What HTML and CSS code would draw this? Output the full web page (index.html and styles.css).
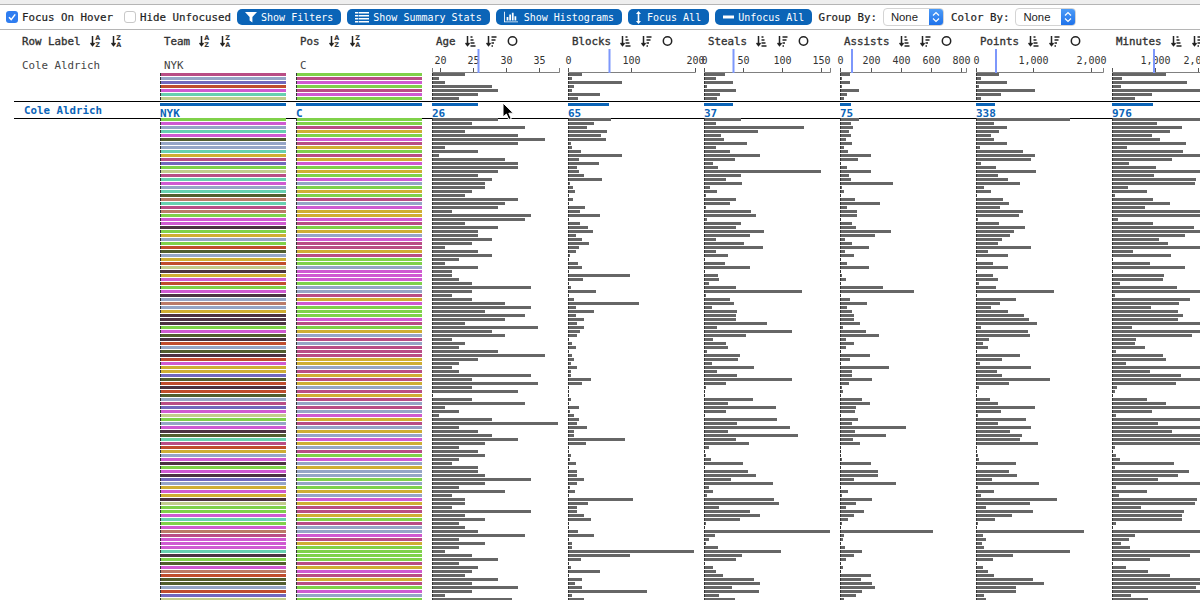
FILE: index.html
```html
<!DOCTYPE html>
<html>
	<head>
		<title>Table Lens</title>
		<link rel="stylesheet" href="styles.css">
	</head>
	<body>
		<svg class="defs">
			<symbol id="i-az" viewBox="0 0 11 12">
				<path d="M2.5 1V10M.5 8L2.5 10.5L4.5 8" class="ico-line"/>
				<text x="5.2" y="5.4" class="ico-letter">A</text>
				<text x="5.2" y="11.8" class="ico-letter">Z</text>
			</symbol>
			<symbol id="i-za" viewBox="0 0 11 12">
				<path d="M2.5 1V10M.5 8L2.5 10.5L4.5 8" class="ico-line"/>
				<text x="5.2" y="5.4" class="ico-letter">Z</text>
				<text x="5.2" y="11.8" class="ico-letter">A</text>
			</symbol>
			<symbol id="i-up" viewBox="0 0 11 12">
				<path d="M2.5 1V10M.5 8L2.5 10.5L4.5 8" class="ico-line"/>
				<path d="M5.5 2H7.5M5.5 5H8.5M5.5 8H9.5M5.5 11H10.5" class="ico-line"/>
			</symbol>
			<symbol id="i-down" viewBox="0 0 11 12">
				<path d="M2.5 1V10M.5 8L2.5 10.5L4.5 8" class="ico-line"/>
				<path d="M5.5 2H10.5M5.5 5H9.5M5.5 8H8M5.5 11H7" class="ico-line"/>
			</symbol>
			<symbol id="i-circle" viewBox="0 0 11 12">
				<circle cx="5.5" cy="6" r="4.2" class="ico-ring"/>
			</symbol>
		</svg>

		<div class="chrome"></div>

		<div class="toolbar">
			<span class="check on">
				<svg width="12" height="12" viewBox="0 0 12 12"><path d="M3 6.2L5.2 8.6L9.2 3.4" class="tick-mark"/></svg>
			</span>
			<span class="tool-label first">Focus On Hover</span>
			<span class="check"></span>
			<span class="tool-label">Hide Unfocused</span>

			<div class="btn">
				<svg width="12" height="12" viewBox="0 0 12 12" class="btn-ico"><path d="M0 1H12L7.4 6V11.5L4.6 9.6V6Z"/></svg>
				Show Filters
			</div>
			<div class="btn">
				<svg width="14" height="12" viewBox="0 0 14 12" class="btn-ico"><path d="M0 1H14V2.6H0ZM0 4H14V5.6H0ZM0 7H14V8.6H0ZM0 10H14V11.6H0Z"/><path d="M3 1H3.6V12H3Z" class="btn-cut"/></svg>
				Show Summary Stats
			</div>
			<div class="btn">
				<svg width="14" height="12" viewBox="0 0 16 12" class="btn-ico wide"><path d="M0 0H1V11H16V12H0ZM3 6H5V10H3ZM6 3H8V10H6ZM9 1H11V10H9ZM12 5H14V10H12Z"/></svg>
				Show Histograms
			</div>
			<div class="btn">
				<svg width="5" height="13" viewBox="0 0 5 13" class="btn-ico wide"><path d="M2.5 0L5 3H3.3V10H5L2.5 13L0 10H1.7V3H0Z"/></svg>
				Focus All
			</div>
			<div class="btn">
				<svg width="11" height="12" viewBox="0 0 11 12" class="btn-ico"><path d="M0 4.5H11V7.5H0Z"/></svg>
				Unfocus All
			</div>

			<span class="tool-label">Group By:</span>
			<div class="select">
				<span class="select-text">None</span>
				<span class="select-arrows"><svg width="8" height="12" viewBox="0 0 8 12"><path d="M1 4.5L4 1.5L7 4.5M1 7.5L4 10.5L7 7.5" class="chev"/></svg></span>
			</div>
			<span class="tool-label">Color By:</span>
			<div class="select">
				<span class="select-text">None</span>
				<span class="select-arrows"><svg width="8" height="12" viewBox="0 0 8 12"><path d="M1 4.5L4 1.5L7 4.5M1 7.5L4 10.5L7 7.5" class="chev"/></svg></span>
			</div>
		</div>

		<div class="table" id="table">
			<div class="focus-band"></div>
			<div class="col label-col">
				<div class="col-head">
					<span class="col-name">Row Label</span>
					<svg class="ico"><use href="#i-az"/></svg>
					<svg class="ico"><use href="#i-za"/></svg>
				</div>
				<div class="col-sub"><div class="sub-value">Cole Aldrich</div></div>
				<div class="top-gap"></div>
				<div class="focus-label">Cole Aldrich</div>
			</div>
		</div>

		<svg class="cursor" width="14" height="19" viewBox="0 0 14 19">
			<path d="M1 1V15L4.4 12L6.8 17.6L9.2 16.6L6.8 11.2H11.4Z" class="cursor-arrow"/>
		</svg>

		<script src="main.js"></script>
	</body>
</html>
```

FILE: styles.css
```css
html, body {
	margin: 0;
	padding: 0;
	width: 1200px;
	height: 600px;
	overflow: hidden;
	background: white;
	color: #222;
	font-family: "DejaVu Sans Mono", monospace;
	font-size: 10.8px;
}
.defs {
	display: none;
}
.chrome {
	height: 4px;
	background: #eeeeee;
	border-bottom: 1px solid #b5b5b5;
}

/* top controls */
.toolbar {
	display: flex;
	align-items: center;
	height: 24px;
	padding-left: 6px;
	border-bottom: 1px solid #b5b5b5;
	box-sizing: content-box;
}
.check {
	display: block;
	box-sizing: border-box;
	width: 12px;
	height: 12px;
	border: 1px solid #c8c8c8;
	border-radius: 3px;
	background: white;
	margin-right: 4px;
}
.check.on {
	border: 0;
	background: #2f7df0;
}
.check svg {
	display: block;
}
.tick-mark {
	fill: none;
	stroke: white;
	stroke-width: 1.5;
}
.tool-label {
	white-space: nowrap;
	margin-right: 6px;
	-webkit-text-stroke: 0.2px #222;
}
.tool-label.first {
	margin-right: 11px;
}
.btn {
	display: flex;
	align-items: center;
	height: 16px;
	padding: 0 8px;
	margin-right: 6px;
	background: #0b64b7;
	border-radius: 5px;
	color: white;
	font-size: 10px;
	white-space: nowrap;
}
.btn-ico {
	fill: white;
	margin-right: 4px;
}
.btn-ico.wide {
	margin-right: 6px;
}
.btn-cut {
	fill: #0b64b7;
}
.select {
	display: flex;
	box-sizing: border-box;
	width: 61px;
	height: 18px;
	margin-right: 7px;
	border: 1px solid #d4d4d4;
	border-radius: 4px;
	background: white;
	overflow: hidden;
}
.select-text {
	flex: 1;
	padding-left: 7px;
	line-height: 16px;
	font-family: "Liberation Sans", sans-serif;
	font-size: 11.3px;
	color: #222;
}
.select-arrows {
	display: flex;
	align-items: center;
	justify-content: center;
	width: 14px;
	background: linear-gradient(#4c9bf7, #1f72ea);
}
.chev {
	fill: none;
	stroke: white;
	stroke-width: 1.2;
}

/* columns */
.table {
	position: relative;
	z-index: 0;
	display: flex;
	gap: 10px;
	padding-left: 22px;
}
.focus-band {
	position: absolute;
	z-index: -1;
	top: 71px;
	left: 14px;
	right: 0;
	height: 16px;
	border-top: 1px solid black;
	border-bottom: 1px solid black;
}
.col {
	flex: none;
	width: 126px;
}
.label-col {
	width: 128px;
}
.col-head {
	display: flex;
	align-items: center;
	height: 16px;
	padding: 3px 0 0 4px;
	white-space: nowrap;
}
.label-col .col-head {
	padding-left: 0;
}
.col-name {
	color: #333;
	-webkit-text-stroke: 0.35px #333;
	margin-right: 9px;
}
.ico {
	flex: none;
	width: 11px;
	height: 12px;
	margin-right: 10px;
}
.ico-line {
	fill: none;
	stroke: #222;
	stroke-width: 1.5;
}
.ico-ring {
	fill: none;
	stroke: #222;
	stroke-width: 1.5;
}
.ico-letter {
	font-family: "DejaVu Sans", sans-serif;
	font-size: 6.5px;
	font-weight: bold;
	fill: #333;
}
.col-sub {
	height: 24px;
}
.sub-value {
	padding: 10px 0 0 4px;
	line-height: 13px;
	color: #444;
}
.label-col .sub-value {
	padding-left: 0;
}
.axis {
	display: block;
	overflow: visible;
}
.axis-line {
	fill: none;
	stroke: #808080;
}
.axis-tick {
	stroke: #555;
}
.axis-text {
	font-family: "DejaVu Sans Mono", monospace;
	font-size: 10px;
	fill: #333;
	text-anchor: middle;
}
.axis-marker {
	fill: #7d97fb;
}
.top-gap {
	height: 28px;
}
.focus-label {
	padding: 3px 0 0 2px;
	line-height: 13px;
	font-weight: bold;
	color: #0b64b7;
}
.bar {
	box-sizing: border-box;
	height: 3px;
	margin-bottom: 1px;
	border-left: 1px solid #333;
	background: #666;
}
.focus-cell {
	height: 17px;
	padding-top: 2px;
	box-sizing: border-box;
}
.focus-bar {
	height: 3px;
	background: #0b64b7;
}
.focus-value {
	line-height: 15px;
	font-size: 11px;
	font-weight: bold;
	color: #0b64b7;
}

/* categorical colours */
.c-g { background: #7fd14a; }
.c-m { background: #cf5ad1; }
.c-b { background: #95a5c6; }
.c-t { background: #67d0b0; }
.c-o { background: #525e2e; }
.c-y { background: #cfae33; }
.c-p { background: #b94d85; }
.c-v { background: #7268bd; }
.c-k { background: #c2cc8c; }
.c-s { background: #bb7b68; }
.c-d { background: #4c3342; }
.c-r { background: #c04d2d; }

.cursor {
	position: absolute;
	left: 502px;
	top: 102px;
}
.cursor-arrow {
	fill: black;
	stroke: white;
	stroke-width: 1;
}
```

FILE: main.js
```js
// team and pos are one letter per row, see the .c-* classes
var teamTop = "pbvrmtk";
var posTop = "gpmgpmg";
var team = "gmbtmobbtypvgkptmbtostpsgmmdgybgrobyrkdym" +
	"rgmdbsbydddgmodrbodrmyyvordrobpvmkgbmdotpr" +
	"ybmdgmdvbymydkggmtgmspmmmtdgomsroobrvk";
var pos = "ggpygmpygpymgygmbgygpbmyympgybmppypggbmmm" +
	"gbbpymgggmpgybpbpppyybpypybpypbpbmypbybmyb" +
	"pgmbybbgbgybmyppygpbbmpyggggpympypgmbg";

var columns = [
	{
		name: "Age", marker: 45.5, focus: 46, value: "26", end: 127,
		ticks: [[8, "20"], [41, "25"], [74, "30"], [107, "35"]],
		top: [33, 7, 13, 60, 66, 46, 27],
		rows: [66,40,93,33,86,113,86,13,46,7,73,86,86,66,46,60,53,53,40,33,86,73,66,20,99,93,33,66,46,46,60,40,13,46,60,27,13,46,20,20,27,
			40,99,40,20,40,73,99,53,93,73,33,106,60,73,20,33,27,66,113,46,27,20,27,99,40,106,40,86,1,40,93,13,27,7,60,126,27,46,60,86,53,27,46,53,27,20,46,46,53,99,53,27,73,20,33,33,20,99,33,53,27,33,46,93,27,53,27,13,40,66,27,46,40,33,66,40,86,40,13,80]
	},
	{
		name: "Blocks", marker: 40.5, focus: 41, value: "65", end: 127,
		ticks: [[0, "0"], [63.5, "100"], [127, "200"]],
		top: [14, 4, 54, 6, 4, 32, 10],
		rows: [43,26,19,39,33,38,3,4,13,54,11,31,9,11,16,34,2,5,7,1,5,1,17,12,32,1,12,20,25,8,14,21,11,8,2,1,10,14,1,62,15,
			1,3,28,1,6,71,8,26,8,16,9,16,12,9,1,4,8,1,4,6,3,9,3,3,23,14,1,1,1,3,1,11,2,6,11,9,19,6,6,57,18,1,1,3,2,8,1,9,9,16,9,2,7,1,65,20,9,9,16,23,1,1,10,26,1,4,4,126,62,13,1,3,32,1,14,7,14,79,4,16]
	},
	{
		name: "Steals", marker: 28.5, focus: 29, value: "37", end: 126,
		ticks: [[0, "0"], [39, "50"], [78, "100"], [117, "150"]],
		top: [21, 12, 29, 3, 32, 16, 13],
		rows: [37,12,100,54,17,20,43,12,26,56,31,9,14,117,37,22,38,6,13,2,32,26,2,47,52,3,37,32,60,46,12,40,59,12,24,1,21,46,1,14,15,5,32,98,2,26,30,8,33,32,32,63,13,88,42,9,22,24,3,36,34,8,50,13,33,88,22,2,1,1,49,24,72,22,1,73,33,86,24,94,32,45,5,1,2,7,39,1,44,52,27,69,5,9,3,70,75,15,46,56,36,2,1,126,11,5,2,14,77,38,32,1,9,12,19,50,56,28,55,15,31]
	},
	{
		name: "Assists", marker: 11, focus: 11, value: "75", end: 126,
		ticks: [[0, "0"], [31, "200"], [61, "400"], [91, "600"], [121, "800"]],
		top: [10, 2, 10, 2, 19, 7, 4],
		rows: [19,11,13,9,11,6,12,4,8,31,18,1,7,31,9,11,53,2,4,1,15,40,7,17,17,1,12,16,51,35,5,12,29,5,14,1,7,29,1,2,6,1,43,74,1,10,27,7,12,14,14,20,3,26,39,6,14,6,1,30,10,1,49,12,12,32,9,2,3,1,22,30,16,15,1,18,12,66,15,46,13,20,1,1,1,2,31,1,38,38,14,56,1,8,2,32,16,6,24,14,8,2,1,93,4,3,1,5,22,14,6,1,3,1,31,21,32,35,22,16,4]
	},
	{
		name: "Points", marker: 19, focus: 19, value: "338", end: 127,
		ticks: [[0, "0"], [57, "1,000"], [115, "2,000"]],
		top: [23, 5, 31, 3, 59, 25, 5],
		rows: [94,18,31,23,15,18,31,4,47,59,55,5,20,60,22,32,44,8,15,1,27,33,24,47,43,2,23,49,38,34,26,22,55,12,32,1,17,32,1,17,22,3,20,78,1,40,24,15,32,48,53,61,5,52,54,13,7,12,1,44,26,4,55,21,26,74,33,3,1,1,14,22,59,25,2,50,22,55,34,46,44,62,1,1,2,3,40,1,33,41,16,63,2,18,5,81,54,10,57,36,19,2,1,108,7,10,6,8,94,37,17,1,7,12,18,57,68,40,40,8,10]
	},
	{
		name: "Minutes", marker: 41, focus: 41, value: "976", end: 127,
		ticks: [[0, ""], [43, "1,000"], [86, "2,000"]],
		top: [54, 10, 75, 9, 100, 40, 23],
		rows: [100,45,70,58,40,48,74,15,71,100,60,17,44,100,42,84,83,16,35,3,41,58,33,100,100,6,41,82,100,73,47,56,100,21,59,1,38,73,1,52,51,8,65,100,3,78,67,39,66,71,66,100,20,100,80,24,23,33,4,51,54,14,100,38,69,100,64,5,3,1,35,54,100,40,4,100,46,100,60,100,100,100,3,1,4,8,62,3,77,66,46,100,4,35,7,85,83,29,72,70,70,4,1,100,23,17,9,18,100,78,38,1,14,36,58,100,100,84,100,19,36]
	}
];

function colorBars(letters) {
	var html = "";
	for (var i = 0; i < letters.length; i++) {
		html += '<div class="bar c-' + letters[i] + '"></div>';
	}
	return html;
}

function widthBars(widths) {
	var html = "";
	for (var i = 0; i < widths.length; i++) {
		html += '<div class="bar" style="width:' + widths[i] + 'px"></div>';
	}
	return html;
}

function icon(name) {
	return '<svg class="ico"><use href="#i-' + name + '"/></svg>';
}

function focusCell(width, value) {
	return '<div class="focus-cell"><div class="focus-bar" style="width:' + width + 'px"></div>' +
		'<div class="focus-value">' + value + '</div></div>';
}

function axis(col) {
	var html = '<svg class="axis" width="126" height="24">';
	html += '<path class="axis-line" d="M.5 19V23.5H' + (col.end + .5) + 'V19"/>';
	for (var i = 0; i < col.ticks.length; i++) {
		var x = Math.floor(col.ticks[i][0]) + .5;
		html += '<line class="axis-tick" x1="' + x + '" x2="' + x + '" y1="19" y2="23"/>';
		html += '<text class="axis-text" x="' + x + '" y="15">' + col.ticks[i][1] + '</text>';
	}
	html += '<rect class="axis-marker" x="' + col.marker + '" y="0" width="2" height="24"/>';
	return html + '</svg>';
}

function addColumn(head, sub, top, focus, rows) {
	var div = document.createElement("div");
	div.className = "col";
	div.innerHTML = '<div class="col-head">' + head + '</div><div class="col-sub">' + sub + '</div>' +
		top + focus + rows;
	document.getElementById("table").appendChild(div);
}

function catHead(name) {
	return '<span class="col-name">' + name + '</span>' + icon("az") + icon("za");
}

addColumn(catHead("Team"), '<div class="sub-value">NYK</div>', colorBars(teamTop), focusCell(126, "NYK"), colorBars(team));
addColumn(catHead("Pos"), '<div class="sub-value">C</div>', colorBars(posTop), focusCell(126, "C"), colorBars(pos));

for (var c = 0; c < columns.length; c++) {
	var col = columns[c];
	var head = '<span class="col-name">' + col.name + '</span>' + icon("up") + icon("down") + icon("circle");
	addColumn(head, axis(col), widthBars(col.top), focusCell(col.focus, col.value), widthBars(col.rows));
}
```
